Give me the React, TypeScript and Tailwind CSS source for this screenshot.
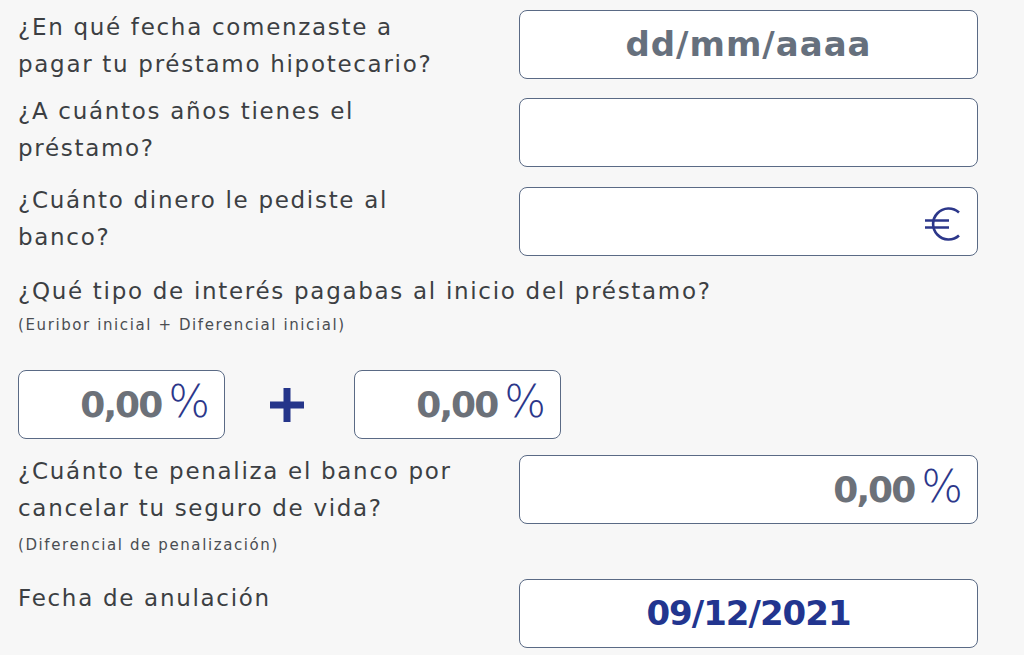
import React from "react";

const dejavu = { fontFamily: "'DejaVu Sans', 'Open Sans', sans-serif" };

function Box({ children, className = "" }: { children?: React.ReactNode; className?: string }) {
  return (
    <div
      className={
        "h-[69px] bg-white border border-[#5a6a85] rounded-[8px] flex items-center " + className
      }
    >
      {children}
    </div>
  );
}

function Percent() {
  return (
    <span className="flex items-baseline">
      <span style={dejavu} className="font-bold text-[36px] text-[#6c7179] tracking-[-2px]">
        0,00
      </span>
      <span style={dejavu} className="text-[44px] font-extralight text-[#2c378a] ml-[7px] leading-none">
        %
      </span>
    </span>
  );
}

function Euro() {
  return (
    <svg width="38" height="38" viewBox="0 0 38 38" fill="none" stroke="#2c378a" strokeWidth="2.6" className="mt-[4px]">
      <path d="M35 7.5 A15.5 15.5 0 1 0 35 30.5" />
      <path d="M1 15.5 H25 M1 22.5 H25" />
    </svg>
  );
}

function Label({ children }: { children: React.ReactNode }) {
  return (
    <p style={dejavu} className="text-[23px] leading-[37px] text-[#3c3f43] tracking-[1.7px]">
      {children}
    </p>
  );
}

function Sub({ children }: { children: React.ReactNode }) {
  return (
    <p style={dejavu} className="text-[15px] leading-[24px] text-[#4a4d52] tracking-[1.6px]">
      {children}
    </p>
  );
}

function Row({ label, sub, children }: { label: React.ReactNode; sub?: string; children: React.ReactNode }) {
  return (
    <div className="flex justify-between items-start">
      <div className="w-[490px] pt-[1px]">
        <Label>{label}</Label>
        {sub && (
          <div className="mt-[6px]">
            <Sub>{sub}</Sub>
          </div>
        )}
      </div>
      {children}
    </div>
  );
}

export default function App() {
  return (
    <div className="w-[1024px] h-[655px] bg-[#f7f7f7] overflow-hidden">
      <div className="w-[978px] pl-[18px] pt-[8px] flex flex-col">
        <Row
          label={
            <>
              ¿En qué fecha comenzaste a
              <br />
              pagar tu préstamo hipotecario?
            </>
          }
        >
          <Box className="w-[459px] justify-center mt-[2px]">
            <span style={dejavu} className="text-[34px] font-bold text-[#66707d] tracking-[1px]">
              dd/mm/aaaa
            </span>
          </Box>
        </Row>

        <div className="mt-[9px]">
          <Row
            label={
              <>
                ¿A cuántos años tienes el
                <br />
                préstamo?
              </>
            }
          >
            <Box className="w-[459px] mt-[6px]" />
          </Row>
        </div>

        <div className="mt-[14px]">
          <Row
            label={
              <>
                ¿Cuánto dinero le pediste al
                <br />
                banco?
              </>
            }
          >
            <Box className="w-[459px] justify-end pr-[15px] mt-[6px]">
              <Euro />
            </Box>
          </Row>
        </div>

        <div className="mt-[17px]">
          <Label>¿Qué tipo de interés pagabas al inicio del préstamo?</Label>
          <div className="mt-[3px]">
            <Sub>(Euribor inicial + Diferencial inicial)</Sub>
          </div>
        </div>

        <div className="flex items-center mt-[33px]">
          <Box className="w-[207px] justify-end pr-[14px]">
            <Percent />
          </Box>
          <svg width="40" height="40" viewBox="0 0 40 40" className="ml-[42px] mr-[47px]">
            <path d="M20 3 V37 M3 20 H37" stroke="#25358a" strokeWidth="7" strokeLinecap="butt" />
          </svg>
          <Box className="w-[207px] justify-end pr-[14px]">
            <Percent />
          </Box>
        </div>

        <div className="mt-[13px]">
          <Row
            label={
              <>
                ¿Cuánto te penaliza el banco por
                <br />
                cancelar tu seguro de vida?
              </>
            }
            sub="(Diferencial de penalización)"
          >
            <Box className="w-[459px] justify-end pr-[14px] mt-[3px]">
              <Percent />
            </Box>
          </Row>
        </div>

        <div className="mt-[22px]">
          <Row label="Fecha de anulación">
            <Box className="w-[459px] justify-center">
              <span style={dejavu} className="text-[34px] font-bold text-[#22358f] tracking-[-1px]">
                09/12/2021
              </span>
            </Box>
          </Row>
        </div>
      </div>
    </div>
  );
}
